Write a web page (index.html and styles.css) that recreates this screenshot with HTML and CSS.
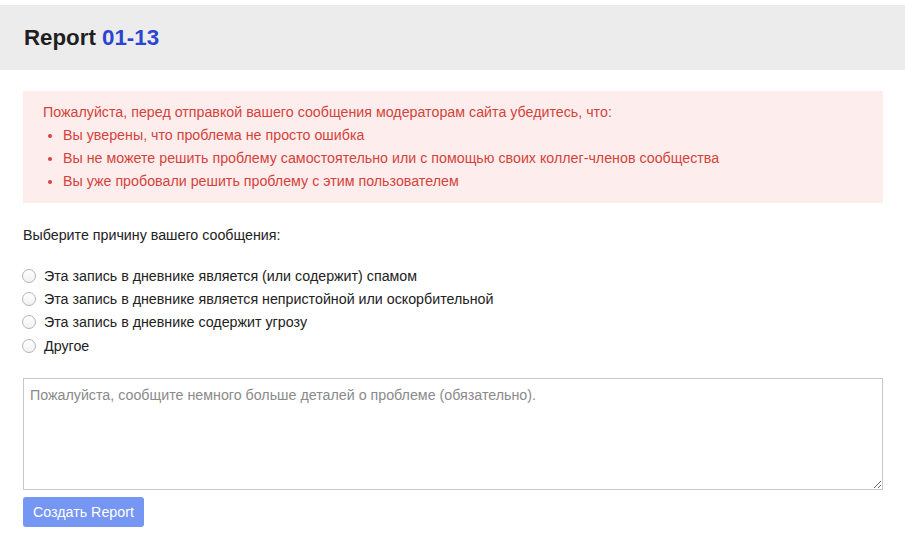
FILE: index.html
```html
<!DOCTYPE html>
<html lang="ru">
<head>
    <meta charset="UTF-8">
    <meta name="viewport" content="width=device-width, initial-scale=1.0">
    <title>Report 01-13</title>
    <link rel="stylesheet" href="styles.css">
</head>
<body>
    <header class="page-header">
        <h1>Report <span class="report-id">01-13</span></h1>
    </header>
    <div class="container">
        <!-- Waarschuwing voor het melden -->
        <div class="alert">
            <p>Пожалуйста, перед отправкой вашего сообщения модераторам сайта убедитесь, что:</p>
            <ul>
                <li>Вы уверены, что проблема не просто ошибка</li>
                <li>Вы не можете решить проблему самостоятельно или с помощью своих коллег-членов сообщества</li>
                <li>Вы уже пробовали решить проблему с этим пользователем</li>
            </ul>
        </div>

        <p class="question">Выберите причину вашего сообщения:</p>

        <div class="reasons">
            <label><input type="radio" name="reason" value="spam"> Эта запись в дневнике является (или содержит) спамом</label>
            <label><input type="radio" name="reason" value="offensive"> Эта запись в дневнике является непристойной или оскорбительной</label>
            <label><input type="radio" name="reason" value="threat"> Эта запись в дневнике содержит угрозу</label>
            <label><input type="radio" name="reason" value="other"> Другое</label>
        </div>

        <textarea id="details" placeholder="Пожалуйста, сообщите немного больше деталей о проблеме (обязательно)."></textarea>
        <button id="createButton">Создать Report</button>
    </div>
</body>
</html>
```

FILE: styles.css
```css
body {
    font-family: "Liberation Sans", Arial, sans-serif;
    font-size: 14.25px;
    color: #222;
    background-color: #ffffff;
    margin: 0;
}
.page-header {
    margin-top: 5px;
    height: 65px;
    background-color: #ececec;
    padding: 0 24px;
    display: flex;
    align-items: center;
}
.page-header h1 {
    margin: 0;
    font-size: 22.3px;
    font-weight: bold;
    color: #1f1f1f;
}
.report-id {
    color: #2b44d4;
}
.container {
    padding: 21px 22px 0 23px;
}
.alert {
    background-color: #fdeeed;
    color: #d5423b;
    padding: 10px 20px;
    line-height: 23px;
}
.alert p {
    margin: 0;
}
.alert ul {
    margin: 0;
    padding-left: 20px;
}
.question {
    margin: 22px 0 0;
    line-height: 20px;
}
.reasons {
    margin-top: 19px;
    display: flex;
    flex-direction: column;
}
.reasons label {
    display: flex;
    align-items: center;
    height: 23.3px;
    margin-left: -1px;
}
.reasons input {
    appearance: none;
    -webkit-appearance: none;
    box-sizing: border-box;
    margin: 0 8px 0 0;
    width: 14px;
    height: 14px;
    border: 1px solid #b4b4b4;
    border-radius: 50%;
    background: linear-gradient(#ffffff, #f1f1f1);
}
.reasons input:checked {
    background: radial-gradient(circle, #4a78e8 0 3px, #ffffff 3.5px);
}
textarea {
    display: block;
    box-sizing: border-box;
    width: 100%;
    height: 112px;
    margin-top: 21px;
    padding: 6px;
    border: 1px solid #c8c8c8;
    font-family: "Liberation Sans", Arial, sans-serif;
    font-size: 14.25px;
    line-height: 20px;
}
textarea::placeholder {
    color: #8a8a8a;
}
button {
    margin-top: 7px;
    height: 30px;
    padding: 0 10px;
    background-color: #7596f2;
    color: #ffffff;
    border: none;
    border-radius: 3px;
    font-family: "Liberation Sans", Arial, sans-serif;
    font-size: 14.25px;
    cursor: pointer;
}
button:hover {
    background-color: #5f83ec;
}
```
